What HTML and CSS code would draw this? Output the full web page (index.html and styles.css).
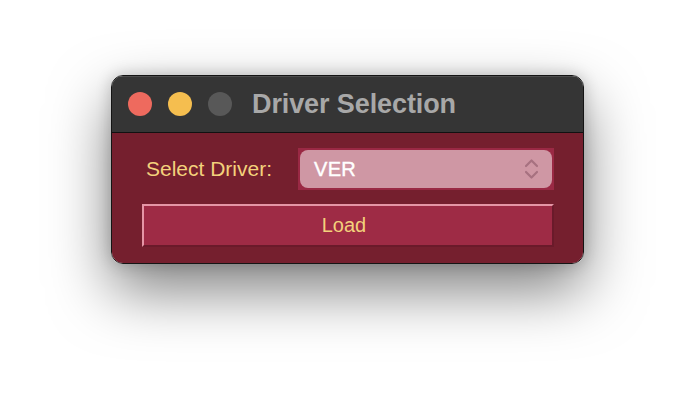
FILE: index.html
```html
<!DOCTYPE html>
<html>
<head>
<meta charset="utf-8">
<link rel="stylesheet" href="styles.css">
</head>
<body>
<div class="stage">
  <div class="window">
    <div class="titlebar">
      <span class="light red"></span>
      <span class="light yellow"></span>
      <span class="light gray"></span>
      <span class="title">Driver Selection</span>
    </div>
    <div class="content">
      <div class="row">
        <span class="label">Select Driver:</span>
        <div class="select-wrap">
          <div class="select">
            <span class="value">VER</span>
            <svg class="chev" width="15" height="22" viewBox="0 0 15 22">
              <path d="M2 8 L7.5 2.5 L13 8" fill="none" stroke="#a77180" stroke-width="2.2" stroke-linecap="round" stroke-linejoin="round"/>
              <path d="M2 14 L7.5 19.5 L13 14" fill="none" stroke="#a77180" stroke-width="2.2" stroke-linecap="round" stroke-linejoin="round"/>
            </svg>
          </div>
        </div>
      </div>
      <button class="load">Load</button>
    </div>
  </div>
</div>
</body>
</html>
```

FILE: styles.css
```css
html, body {
  margin: 0;
  padding: 0;
  background: #ffffff;
  width: 696px;
  height: 412px;
  overflow: hidden;
}

.stage {
  display: flex;
  justify-content: flex-start;
  padding-top: 75px;
  padding-left: 111px;
}

.window {
  width: 471px;
  height: 187px;
  border: 1px solid #141414;
  border-radius: 12px;
  overflow: hidden;
  display: flex;
  flex-direction: column;
  box-shadow: 0 26px 60px rgba(0, 0, 0, 0.5), 0 0 16px rgba(0, 0, 0, 0.2);
  font-family: "Liberation Sans", Arial, sans-serif;
}

.titlebar {
  height: 56px;
  flex: none;
  background: #353535;
  border-bottom: 1px solid #111111;
  box-shadow: inset 0 1px 0 rgba(255, 255, 255, 0.12);
  display: flex;
  align-items: center;
  padding-left: 16px;
  gap: 16px;
}

.light {
  width: 24px;
  height: 24px;
  border-radius: 50%;
  flex: none;
}
.red { background: #ee6a5e; }
.yellow { background: #f5be4f; }
.gray { background: #585858; }

.title {
  margin-left: 4px;
  font-size: 27px;
  font-weight: bold;
  color: #a8a8a8;
  letter-spacing: -0.1px;
}

.content {
  flex: 1;
  background: #751f2e;
  padding: 15px 29px 0 30px;
  display: flex;
  flex-direction: column;
  gap: 14px;
}

.row {
  display: flex;
  align-items: center;
  height: 42px;
}

.label {
  margin-left: 4px;
  font-size: 21px;
  color: #f3d17c;
}

.select-wrap {
  margin-left: auto;
  width: 252px;
  height: 38px;
  padding: 2px;
  background: #9a2944;
}

.select {
  height: 38px;
  border-radius: 8px;
  background: #cf97a4;
  display: flex;
  align-items: center;
  justify-content: space-between;
  padding: 0 13px 0 14px;
}

.value {
  font-size: 20px;
  color: #ffffff;
  letter-spacing: 0.3px;
  -webkit-text-stroke: 0.4px #ffffff;
}

.chev {
  display: block;
}

.load {
  height: 43px;
  width: 412px;
  margin: 0;
  padding: 0 8px 0 0;
  background: #9e2b45;
  border-style: solid;
  border-width: 2px;
  border-color: #e596a6 #6a1a2a #6a1a2a #e596a6;
  font-family: "Liberation Sans", Arial, sans-serif;
  font-size: 20px;
  color: #f3d17c;
  text-align: center;
}
```
